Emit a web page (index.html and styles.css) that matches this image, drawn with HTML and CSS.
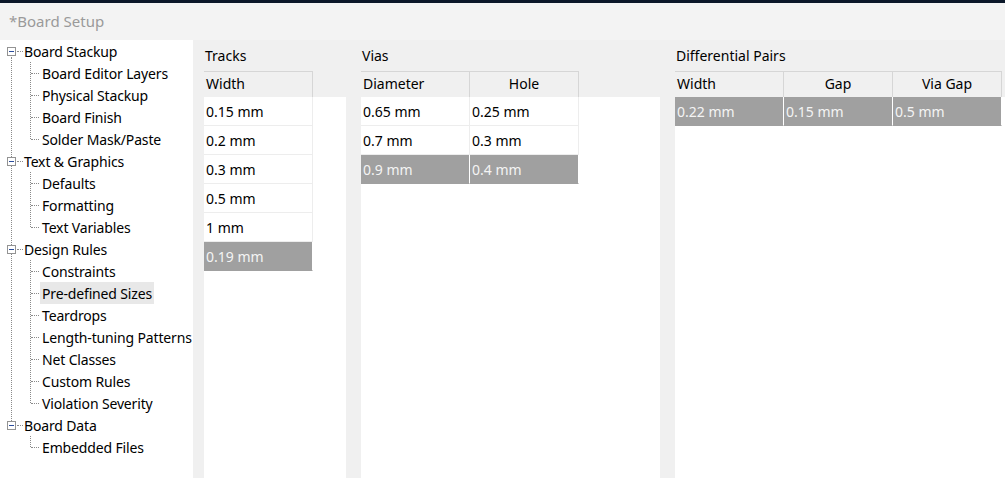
FILE: index.html
```html
<!DOCTYPE html>
<html>
<head>
<meta charset="utf-8">
<link rel="stylesheet" href="styles.css">
</head>
<body>
<div class="topbar"></div>
<div class="titlebar">*Board Setup</div>
<div class="main">
  <div class="tree">
    <ul class="root">
      <li class="group">
        <div class="node"><span class="box"></span><span class="dash"></span><span class="label">Board Stackup</span></div>
        <ul class="kids">
          <li><span class="label">Board Editor Layers</span></li>
          <li><span class="label">Physical Stackup</span></li>
          <li><span class="label">Board Finish</span></li>
          <li><span class="label">Solder Mask/Paste</span></li>
        </ul>
      </li>
      <li class="group">
        <div class="node"><span class="box"></span><span class="dash"></span><span class="label">Text &amp; Graphics</span></div>
        <ul class="kids">
          <li><span class="label">Defaults</span></li>
          <li><span class="label">Formatting</span></li>
          <li><span class="label">Text Variables</span></li>
        </ul>
      </li>
      <li class="group">
        <div class="node"><span class="box"></span><span class="dash"></span><span class="label">Design Rules</span></div>
        <ul class="kids">
          <li><span class="label">Constraints</span></li>
          <li><span class="label sel">Pre-defined Sizes</span></li>
          <li><span class="label">Teardrops</span></li>
          <li><span class="label">Length-tuning Patterns</span></li>
          <li><span class="label">Net Classes</span></li>
          <li><span class="label">Custom Rules</span></li>
          <li><span class="label">Violation Severity</span></li>
        </ul>
      </li>
      <li class="group">
        <div class="node"><span class="box"></span><span class="dash"></span><span class="label">Board Data</span></div>
        <ul class="kids">
          <li><span class="label">Embedded Files</span></li>
        </ul>
      </li>
    </ul>
  </div>
  <div class="content">
    <section class="panel tracks">
      <div class="ptitle">Tracks</div>
      <div class="grid">
        <div class="hrow"><div class="hcell left">Width</div></div>
        <div class="gbody">
          <div class="row"><div class="cell">0.15 mm</div></div>
          <div class="row"><div class="cell">0.2 mm</div></div>
          <div class="row"><div class="cell">0.3 mm</div></div>
          <div class="row"><div class="cell">0.5 mm</div></div>
          <div class="row"><div class="cell">1 mm</div></div>
          <div class="row selected"><div class="cell">0.19 mm</div></div>
        </div>
      </div>
    </section>
    <section class="panel vias">
      <div class="ptitle">Vias</div>
      <div class="grid">
        <div class="hrow"><div class="hcell left">Diameter</div><div class="hcell">Hole</div></div>
        <div class="gbody">
          <div class="row"><div class="cell">0.65 mm</div><div class="cell">0.25 mm</div></div>
          <div class="row"><div class="cell">0.7 mm</div><div class="cell">0.3 mm</div></div>
          <div class="row selected"><div class="cell">0.9 mm</div><div class="cell">0.4 mm</div></div>
        </div>
      </div>
    </section>
    <section class="panel pairs">
      <div class="ptitle">Differential Pairs</div>
      <div class="grid">
        <div class="hrow"><div class="hcell left">Width</div><div class="hcell">Gap</div><div class="hcell">Via Gap</div></div>
        <div class="gbody">
          <div class="row selected"><div class="cell">0.22 mm</div><div class="cell">0.15 mm</div><div class="cell">0.5 mm</div></div>
        </div>
      </div>
    </section>
  </div>
</div>
</body>
</html>
```

FILE: styles.css
```css
* { box-sizing: border-box; }
html, body { margin: 0; padding: 0; }
body {
  width: 1005px;
  height: 478px;
  overflow: hidden;
  background: #f0f0f0;
  font-family: "Noto Sans", "Open Sans", sans-serif;
  font-size: 14px;
  color: #000;
  display: flex;
  flex-direction: column;
}
.topbar {
  height: 3px;
  background: #0b1729;
  flex: none;
}
.titlebar {
  height: 37px;
  flex: none;
  background: #f3f3f3;
  color: #9a9a9a;
  font-size: 15px;
  padding-left: 9px;
  line-height: 37px;
}
.main {
  flex: 1;
  display: flex;
  min-height: 0;
}
.tree {
  width: 193px;
  flex: none;
  background: #fff;
  overflow: hidden;
  letter-spacing: -0.15px;
}
.tree ul { list-style: none; margin: 0; padding: 0; }
.root { position: relative; }
.root::before {
  content: "";
  position: absolute;
  left: 11px;
  top: 17px;
  bottom: 37px;
  border-left: 1px dotted #8a8a8a;
}
.node {
  height: 22px;
  display: flex;
  align-items: center;
  padding-left: 7px;
  position: relative;
}
.box {
  width: 9px;
  height: 9px;
  border: 1px solid #939393;
  background: #fff;
  position: relative;
  flex: none;
  z-index: 1;
}
.box::after {
  content: "";
  position: absolute;
  left: 1px;
  top: 3px;
  width: 5px;
  height: 1px;
  background: #2b4d9c;
}
.dash {
  width: 6px;
  margin: 0 1px 0 1px;
  border-top: 1px dotted #8a8a8a;
  flex: none;
}
.label { white-space: nowrap; }
.kids { position: relative; }
.kids::before {
  content: "";
  position: absolute;
  left: 30px;
  top: 0;
  bottom: 11px;
  border-left: 1px dotted #8a8a8a;
}
.kids li {
  height: 22px;
  display: flex;
  align-items: center;
  padding-left: 40px;
  position: relative;
}
.kids li::before {
  content: "";
  position: absolute;
  left: 31px;
  top: 11px;
  width: 8px;
  border-top: 1px dotted #8a8a8a;
}
.kids .label {
  padding: 0 2px;
  height: 22px;
  line-height: 24px;
}
.kids .label.sel { background: #e8e8e8; }

.content {
  flex: 1;
  display: flex;
  padding-left: 11px;
  gap: 15px;
  min-width: 0;
}
.panel {
  display: flex;
  flex-direction: column;
  flex: none;
}
.tracks { width: 142px; }
.vias { width: 299px; }
.pairs { width: 330px; }
.ptitle {
  height: 31px;
  line-height: 32px;
  padding-left: 1px;
  flex: none;
}
.grid {
  flex: 1;
  display: flex;
  flex-direction: column;
}
.hrow {
  height: 26px;
  display: flex;
  flex: none;
}
.hcell {
  width: 109px;
  border-top: 1px solid #d6d6d6;
  border-right: 1px solid #d6d6d6;
  text-align: center;
  line-height: 24px;
}
.hcell.left { text-align: left; padding-left: 2px; }
.gbody {
  flex: 1;
  background: #fff;
}
.row {
  height: 29px;
  display: flex;
}
.cell {
  width: 109px;
  border-right: 1px solid #ededed;
  border-bottom: 1px solid #ededed;
  padding-left: 2px;
  line-height: 30px;
  white-space: nowrap;
}
.row.selected .cell {
  background: #a0a0a0;
  color: #f4f4f4;
  border-right-color: #fff;
  border-bottom-color: #a0a0a0;
}
```
